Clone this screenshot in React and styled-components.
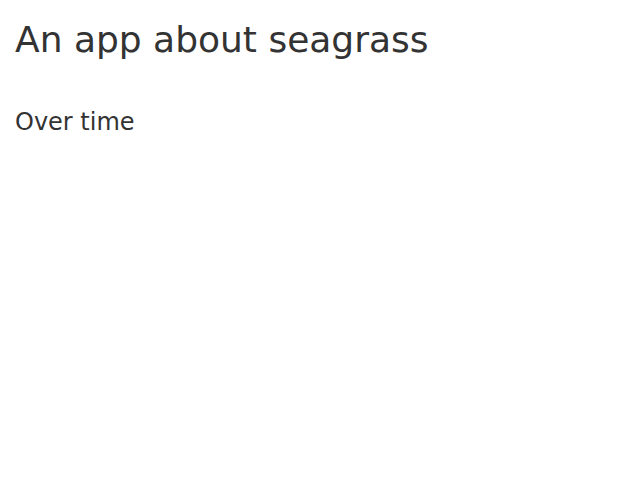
import React from "react";
import styled, { createGlobalStyle } from "styled-components";

const Global = createGlobalStyle`
  html, body { margin: 0; padding: 0; background: #fff; }
  body { font-family: "DejaVu Sans", sans-serif; color: #333; }
`;

const Page = styled.div`
  padding: 15px;
  display: flex;
  flex-direction: column;
`;

const Title = styled.h1`
  margin: 0;
  font-size: 36px;
  font-weight: normal;
  line-height: 1.1;
  margin-top: 5px;
`;

const Section = styled.h2`
  margin: 0;
  margin-top: 49px;
  font-size: 24px;
  font-weight: normal;
  line-height: 1.1;
`;

export default function App() {
  return (
    <>
      <Global />
      <Page>
        <Title>An app about seagrass</Title>
        <Section>Over time</Section>
      </Page>
    </>
  );
}
